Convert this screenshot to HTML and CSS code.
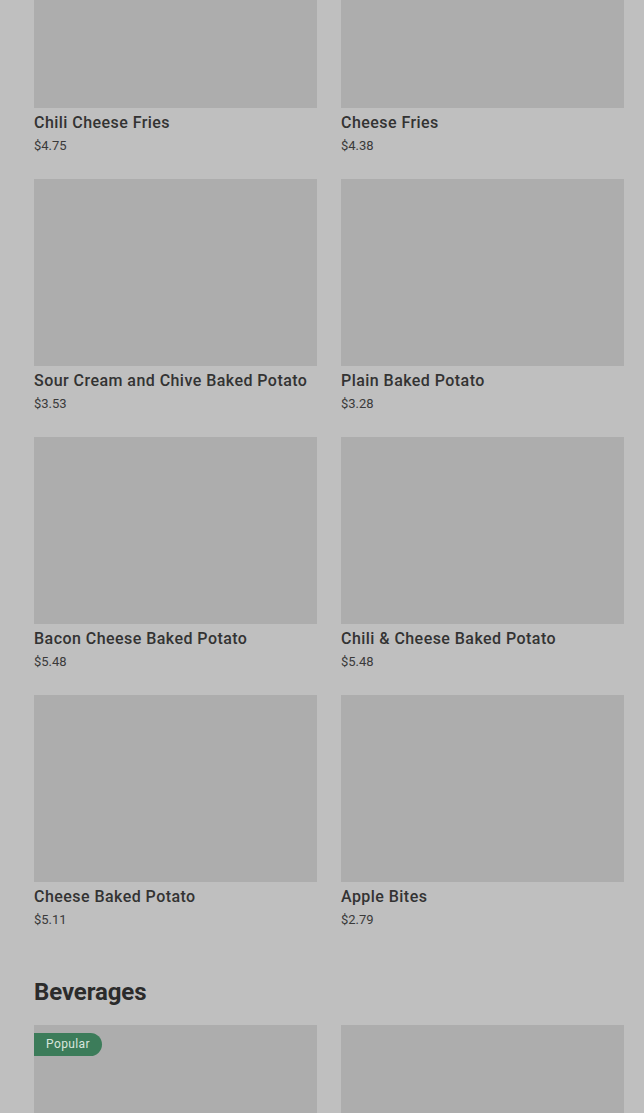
FILE: index.html
```html
<!DOCTYPE html>
<html lang="en">
<head>
    <meta charset="UTF-8">
    <meta name="viewport" content="width=device-width, initial-scale=1.0">
    <title>Menu</title>
    <link rel="stylesheet" href="styles.css">
</head>
<body>
    <div class="menu">
        <div class="grid first">
            <div class="item">
                <div class="thumb"></div>
                <p class="name">Chili Cheese Fries</p>
                <p class="price">$4.75</p>
            </div>
            <div class="item">
                <div class="thumb"></div>
                <p class="name">Cheese Fries</p>
                <p class="price">$4.38</p>
            </div>
            <div class="item">
                <div class="thumb"></div>
                <p class="name">Sour Cream and Chive Baked Potato</p>
                <p class="price">$3.53</p>
            </div>
            <div class="item">
                <div class="thumb"></div>
                <p class="name">Plain Baked Potato</p>
                <p class="price">$3.28</p>
            </div>
            <div class="item">
                <div class="thumb"></div>
                <p class="name">Bacon Cheese Baked Potato</p>
                <p class="price">$5.48</p>
            </div>
            <div class="item">
                <div class="thumb"></div>
                <p class="name">Chili &amp; Cheese Baked Potato</p>
                <p class="price">$5.48</p>
            </div>
            <div class="item">
                <div class="thumb"></div>
                <p class="name">Cheese Baked Potato</p>
                <p class="price">$5.11</p>
            </div>
            <div class="item">
                <div class="thumb"></div>
                <p class="name">Apple Bites</p>
                <p class="price">$2.79</p>
            </div>
        </div>

        <h2 class="section-title">Beverages</h2>
        <div class="grid">
            <div class="item">
                <div class="thumb">
                    <span class="badge">Popular</span>
                </div>
            </div>
            <div class="item">
                <div class="thumb"></div>
            </div>
        </div>
    </div>
</body>
</html>
```

FILE: styles.css
```css
body {
    margin: 0;
    background: #bfbfbf;
    font-family: Roboto, "Liberation Sans", sans-serif;
    color: #2e2e2e;
    overflow: hidden;
}
.menu {
    padding: 0 20px 0 34px;
}
.grid {
    display: grid;
    grid-template-columns: 1fr 1fr;
    column-gap: 24px;
    row-gap: 24px;
}
.grid.first {
    margin-top: -79px;
}
.thumb {
    position: relative;
    height: 187px;
    background: #adadad;
}
.name {
    margin: 5px 0 0;
    font-size: 16px;
    line-height: 20px;
    font-weight: 500;
    letter-spacing: 0.45px;
    color: #333;
    white-space: nowrap;
}
.price {
    margin: 4px 0 0;
    font-size: 13px;
    line-height: 18px;
    color: #3a3a3a;
}
.section-title {
    margin: 47px 0 17px;
    font-size: 24px;
    line-height: 32px;
    font-weight: 700;
    letter-spacing: -0.1px;
    color: #2b2b2b;
}
.badge {
    position: absolute;
    top: 8px;
    left: 0;
    height: 23px;
    line-height: 23px;
    padding: 0 12px;
    font-size: 12px;
    letter-spacing: 0.4px;
    color: #d9e6dd;
    background: #3c7c5a;
    border-radius: 0 12px 12px 0;
}
```
